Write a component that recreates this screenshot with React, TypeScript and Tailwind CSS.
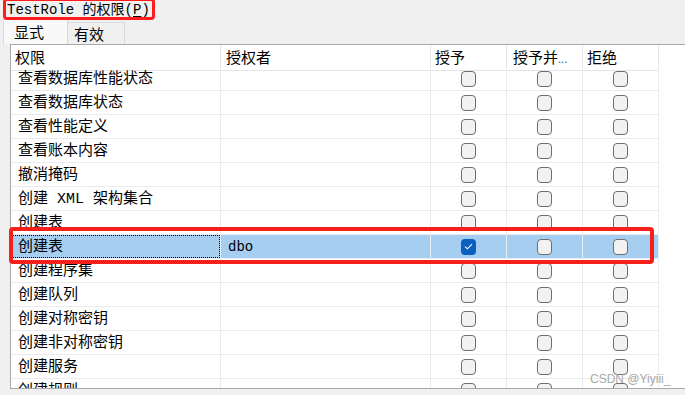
import React from "react";

const cjk = { fontFamily: '"Noto Sans CJK SC", "Noto Sans", sans-serif' };
const mono = { fontFamily: '"Liberation Mono", "Noto Sans CJK SC", monospace' };

const rows = [
  "查看数据库性能状态",
  "查看数据库状态",
  "查看性能定义",
  "查看账本内容",
  "撤消掩码",
  "创建 XML 架构集合",
  "创建表",
  "创建表",
  "创建程序集",
  "创建队列",
  "创建对称密钥",
  "创建非对称密钥",
  "创建服务",
  "创建规则",
];

const SELECTED = 7;
const cols = "grid grid-cols-[210px_210px_76px_76px_76px_1fr]";

function Box({ checked }: { checked?: boolean }) {
  if (checked) {
    return (
      <span className="flex h-[16px] w-[15px] items-center justify-center rounded-[4px] bg-[#0b5fc0]">
        <svg width="9" height="7" viewBox="0 0 9 7">
          <path d="M1 3.6 L3.4 5.8 L8 1.2" fill="none" stroke="white" strokeWidth="1.1" />
        </svg>
      </span>
    );
  }
  return <span className="block h-[16px] w-[15px] rounded-[4px] border border-[#6e6e6e] bg-[#f2f2f2]" />;
}

export default function App() {
  return (
    <div className="relative h-[395px] w-[685px] overflow-hidden bg-[#f0f0f0] text-black">
      {/* title */}
      <div className="relative h-[19px] pl-[7px] text-[14px] leading-[20px]" style={mono}>
        TestRole 的权限(<span className="underline underline-offset-2">P</span>)
        <div className="absolute left-[3px] top-[-2px] h-[22px] w-[152px] rounded-[4px] border-[3px] border-[#ff1c1c]" />
      </div>

      {/* tabs */}
      <div className="flex h-[25px] items-end pl-[3px] text-[15px]" style={cjk}>
        <div className="h-[25px] w-[65px] border-l border-r border-t border-[#d9d9d9] bg-[#f9f9f9] pl-[10px] leading-[24px]">
          显式
        </div>
        <div className="h-[22px] w-[57px] border-r border-t border-[#d9d9d9] bg-[#f0f0f0] pl-[6px] leading-[22px]">
          有效
        </div>
      </div>

      {/* grid */}
      <div className="ml-[10px] h-[345px] w-[680px] overflow-hidden border border-[#a9a9a9] bg-white text-[15px]" style={cjk}>
        <div className={`${cols} h-[22px] leading-[23px]`}>
          <div className="border-b border-r border-[#e5e5e5] pl-[4px]">权限</div>
          <div className="border-b border-r border-[#e5e5e5] pl-[5px]">授权者</div>
          <div className="border-b border-r border-[#e5e5e5] pl-[4px]">授予</div>
          <div className="border-b border-r border-[#e5e5e5] pl-[6px]">
            授予并<span className="text-[11px] text-[#1a73c8]">...</span>
          </div>
          <div className="border-b border-r border-[#e5e5e5] pl-[4px]">拒绝</div>
          <div />
        </div>

        {rows.map((name, i) => {
          const sel = i === SELECTED;
          const cell = `h-[24px] border-b border-r ${sel ? "border-[#e6f0f9] bg-[#a6cef0]" : "border-[#ebebeb]"}`;
          return (
            <div key={i} className={`${cols} leading-[25px]`}>
              <div className={`${cell} pl-[7px]`} style={mono}>
                {sel ? (
                  <div className="h-[23px] -ml-[7px] border border-dotted border-black pl-[6px] leading-[23px]">{name}</div>
                ) : (
                  name
                )}
              </div>
              <div className={`${cell} pl-[7px] text-[14px]`} style={mono}>
                {sel ? "dbo" : ""}
              </div>
              <div className={`${cell} flex items-center justify-center`}>
                <Box checked={sel} />
              </div>
              <div className={`${cell} flex items-center justify-center`}>
                <Box />
              </div>
              <div className={`${cell} flex items-center justify-center`}>
                <Box />
              </div>
              <div />
            </div>
          );
        })}
      </div>

      {/* annotation around selected row */}
      <div className="absolute left-[9px] top-[227px] h-[37px] w-[645px] rounded-[4px] border-[4px] border-[#f5201a]" />

      {/* watermark */}
      <div
        className="absolute left-[590px] top-[370px] text-[12px] text-[#a9a9a9]"
        style={{ fontFamily: '"Liberation Sans", Arial, sans-serif' }}
      >
        CSDN @Yiyiii_
      </div>
    </div>
  );
}
